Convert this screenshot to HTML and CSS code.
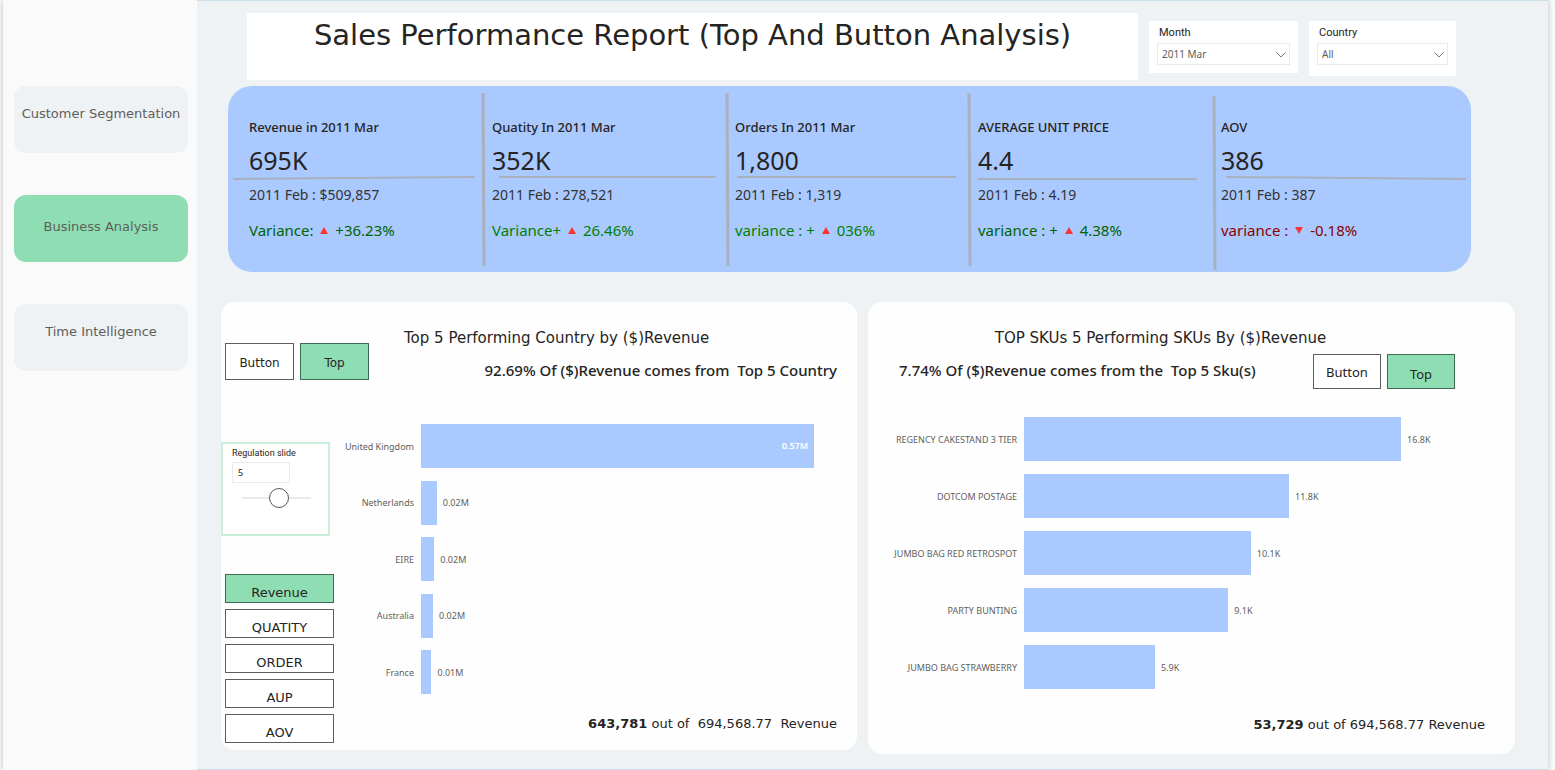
FILE: index.html
```html
<!DOCTYPE html>
<html lang="en">
<head>
<meta charset="utf-8">
<meta name="viewport" content="width=device-width, initial-scale=1">
<title>Sales Performance Report</title>
<link rel="stylesheet" href="styles.css">
</head>
<body>
<div class="report">
  <nav class="sidebar">
    <a class="nav-link" href="#customers">Customer Segmentation</a>
    <a class="nav-link active" href="#business">Business Analysis</a>
    <a class="nav-link" href="#time">Time Intelligence</a>
  </nav>
  <main class="main">
    <header class="header">
      <h1 class="title">Sales Performance Report (Top And Button Analysis)</h1>
      <div class="filter">
        <label for="month">Month</label>
        <div class="select-wrap">
          <select id="month"><option>2011 Mar</option></select>
          <svg class="chevron" viewBox="0 0 10 6"><path d="M0.5 0.5L5 5L9.500 0.500"/></svg>
        </div>
      </div>
      <div class="filter filter-tall">
        <label for="country">Country</label>
        <div class="select-wrap">
          <select id="country"><option>All</option></select>
          <svg class="chevron" viewBox="0 0 10 6"><path d="M0.5 0.5L5 5L9.500 0.500"/></svg>
        </div>
      </div>
    </header>

    <section class="kpis">
      <article class="kpi first">
        <div class="kpi-body">
          <h2 class="kpi-label">Revenue in 2011 Mar</h2>
          <p class="kpi-value">695K</p>
          <svg class="rule"><line x1="2%" y1="4" x2="97%" y2="2"/></svg>
          <p class="kpi-prev">2011 Feb : $509,857</p>
          <p class="kpi-var dark">Variance: <svg class="tri" viewBox="0 0 8 7"><path d="M4 0L8 7H0Z"/></svg> +36.23%</p>
        </div>
      </article>
      <article class="kpi">
        <svg class="sep"><line x1="1" y1="7" x2="2" y2="180"/></svg>
        <div class="kpi-body">
          <h2 class="kpi-label">Quatity In 2011 Mar</h2>
          <p class="kpi-value">352K</p>
          <svg class="rule"><line x1="5%" y1="2" x2="96%" y2="2"/></svg>
          <p class="kpi-prev">2011 Feb : 278,521</p>
          <p class="kpi-var">Variance+ <svg class="tri" viewBox="0 0 8 7"><path d="M4 0L8 7H0Z"/></svg> 26.46%</p>
        </div>
      </article>
      <article class="kpi">
        <svg class="sep"><line x1="2" y1="7" x2="3" y2="180"/></svg>
        <div class="kpi-body">
          <h2 class="kpi-label">Orders In 2011 Mar</h2>
          <p class="kpi-value">1,800</p>
          <svg class="rule"><line x1="3%" y1="2" x2="95%" y2="2"/></svg>
          <p class="kpi-prev">2011 Feb : 1,319</p>
          <p class="kpi-var">variance : + <svg class="tri" viewBox="0 0 8 7"><path d="M4 0L8 7H0Z"/></svg> 036%</p>
        </div>
      </article>
      <article class="kpi">
        <svg class="sep"><line x1="1" y1="7" x2="2" y2="180"/></svg>
        <div class="kpi-body">
          <h2 class="kpi-label">AVERAGE UNIT PRICE</h2>
          <p class="kpi-value">4.4</p>
          <svg class="rule"><line x1="2%" y1="4" x2="94%" y2="4"/></svg>
          <p class="kpi-prev">2011 Feb : 4.19</p>
          <p class="kpi-var dark">variance : + <svg class="tri" viewBox="0 0 8 7"><path d="M4 0L8 7H0Z"/></svg> 4.38%</p>
        </div>
      </article>
      <article class="kpi">
        <svg class="sep"><line x1="3" y1="10" x2="4" y2="184"/></svg>
        <div class="kpi-body">
          <h2 class="kpi-label">AOV</h2>
          <p class="kpi-value">386</p>
          <svg class="rule"><line x1="4%" y1="2" x2="98%" y2="4"/></svg>
          <p class="kpi-prev">2011 Feb : 387</p>
          <p class="kpi-var down">variance : <svg class="tri" viewBox="0 0 8 7"><path d="M0 0H8L4 7Z"/></svg> -0.18%</p>
        </div>
      </article>
    </section>

    <section class="panels">
      <article class="panel panel-country">
        <div class="country-head">
          <div class="toggle">
            <button type="button">Button</button>
            <button type="button" class="on">Top</button>
          </div>
          <div class="country-titles">
            <h2 class="panel-title">Top 5 Performing Country by ($)Revenue</h2>
            <p class="panel-sub">92.69% Of ($)Revenue comes from&nbsp; Top 5 Country</p>
          </div>
        </div>
        <div class="country-body">
          <div class="controls">
            <div class="slicer">
              <label for="topn">Regulation slide</label>
              <input id="topn" class="topn" type="text" value="5">
              <input class="slide" type="range" min="0" max="9" value="5" aria-label="Regulation slide">
            </div>
            <div class="metrics">
              <button type="button" class="on">Revenue</button>
              <button type="button">QUATITY</button>
              <button type="button">ORDER</button>
              <button type="button">AUP</button>
              <button type="button">AOV</button>
            </div>
          </div>
          <div class="country-chart">
            <ul class="chart">
              <li><span class="name">United Kingdom</span><span class="track"><span class="bar" style="width:94.5%"><b>0.57M</b></span></span></li>
              <li><span class="name">Netherlands</span><span class="track"><span class="bar" style="width:3.8%"></span><span class="val">0.02M</span></span></li>
              <li><span class="name">EIRE</span><span class="track"><span class="bar" style="width:3.2%"></span><span class="val">0.02M</span></span></li>
              <li><span class="name">Australia</span><span class="track"><span class="bar" style="width:2.9%"></span><span class="val">0.02M</span></span></li>
              <li><span class="name">France</span><span class="track"><span class="bar" style="width:2.5%"></span><span class="val">0.01M</span></span></li>
            </ul>
            <p class="total"><strong>643,781</strong> out of&nbsp; 694,568.77&nbsp; Revenue</p>
          </div>
        </div>
      </article>

      <article class="panel panel-sku">
        <h2 class="panel-title">TOP SKUs 5 Performing SKUs By ($)Revenue</h2>
        <div class="sku-head">
          <p class="panel-sub">7.74% Of ($)Revenue comes from the&nbsp; Top 5 Sku(s)</p>
          <div class="toggle">
            <button type="button">Button</button>
            <button type="button" class="on">Top</button>
          </div>
        </div>
        <ul class="chart">
          <li><span class="name">REGENCY CAKESTAND 3 TIER</span><span class="track"><span class="bar" style="width:81.8%"></span><span class="val">16.8K</span></span></li>
          <li><span class="name">DOTCOM POSTAGE</span><span class="track"><span class="bar" style="width:57.5%"></span><span class="val">11.8K</span></span></li>
          <li><span class="name">JUMBO BAG RED RETROSPOT</span><span class="track"><span class="bar" style="width:49.2%"></span><span class="val">10.1K</span></span></li>
          <li><span class="name">PARTY BUNTING</span><span class="track"><span class="bar" style="width:44.3%"></span><span class="val">9.1K</span></span></li>
          <li><span class="name">JUMBO BAG STRAWBERRY</span><span class="track"><span class="bar" style="width:28.4%"></span><span class="val">5.9K</span></span></li>
        </ul>
        <p class="total"><strong>53,729</strong> out of 694,568.77 Revenue</p>
      </article>
    </section>
  </main>
</div>
</body>
</html>
```
FILE: styles.css
```css
:root {
  --blue: #aac9ff;
  --green: #8fdeb3;
  --ink: #252423;
  --canvas: #eef2f4;
  --verdana: Verdana, "DejaVu Sans", sans-serif;
  --segoe: "Segoe UI", "Noto Sans", sans-serif;
}

* { box-sizing: border-box; }

body {
  margin: 0;
  padding: 0 7px 0 3px;
  background: #fafafa;
  color: var(--ink);
  font-family: var(--segoe);
}

h1, h2, p, ul { margin: 0; padding: 0; font-weight: 400; }
button, input, select { margin: 0; font: inherit; color: inherit; }

.report {
  display: flex;
  min-height: 100vh;
  box-shadow: 0 0 6px rgba(0, 0, 0, 0.25);
}

/* Sidebar */
.sidebar {
  display: flex;
  flex: 0 0 194px;
  flex-direction: column;
  gap: 42px;
  padding: 86px 9px 0 11px;
  background: #fafafa;
}

.nav-link {
  min-height: 67px;
  padding-top: 18px;
  border-radius: 12px;
  background: var(--canvas);
  color: #605e5c;
  font: 13px/20px var(--verdana);
  text-align: center;
  text-decoration: none;
  white-space: nowrap;
}

.nav-link.active { padding-top: 22px; background: var(--green); }

.main {
  flex: 1;
  min-width: 0;
  border-top: 1px solid #cddfe9;
  border-bottom: 1px solid #cddfe9;
  background: var(--canvas);
}

/* Header */
.header {
  display: flex;
  align-items: flex-start;
  gap: 11px;
  padding: 12px 92px 0 50px;
}

.title {
  flex: 1;
  height: 67px;
  background: #fff;
  font: 29px/44px var(--verdana);
  text-align: center;
  white-space: nowrap;
}

.filter {
  width: 149px;
  margin-top: 8px;
  padding: 4px 8px 8px;
  background: #fff;
}

.filter-tall { width: 147px; padding-bottom: 11px; }

.filter label {
  display: block;
  padding-left: 2px;
  font: 11px/16px Roboto, sans-serif;
}

.select-wrap { position: relative; margin-top: 2px; }

.select-wrap select {
  display: block;
  width: 100%;
  height: 22px;
  padding: 0 4px;
  appearance: none;
  border: 1px solid #eaeaea;
  border-radius: 0;
  background: #fff;
  color: #605e5c;
  font-size: 10px;
}

.chevron {
  position: absolute;
  top: 9px;
  right: 4px;
  width: 10px;
  height: 6px;
  fill: none;
  stroke: #777;
  pointer-events: none;
}

/* KPI band */
.kpis {
  display: grid;
  grid-template-columns: 254fr 243fr 243fr 243fr 260fr;
  margin: 6px 77px 0 31px;
  border-radius: 24px;
  background: var(--blue);
}

.kpi { display: flex; min-width: 0; }
.kpi-body { flex: 1; min-width: 0; padding: 31px 0 32px; }
.kpi-body > h2, .kpi-body > p { padding-left: 5px; white-space: nowrap; }
.kpi.first .kpi-body > h2, .kpi.first .kpi-body > p { padding-left: 21px; }

.sep { flex: 0 0 5px; width: 5px; height: auto; overflow: visible; }
.sep line { stroke: #a9b0be; stroke-width: 3; }
.rule line { stroke: #a9afbb; stroke-width: 2; }

.rule { display: block; width: 100%; height: 6px; }

.kpi-label { font: 500 13px/20px var(--segoe); }
.kpi-value { margin-top: 8px; font: 25px/30px var(--segoe); }
.kpi-prev { margin-top: 4px; color: #333; font-size: 14px; line-height: 20px; }
.kpi-var { margin-top: 15px; color: #008000; font-size: 15px; line-height: 20px; }
.kpi-var.dark { color: #006400; }
.kpi-var.down { color: #8b0000; }
.tri { width: 8px; height: 7px; margin: 0 3px 2px; fill: #fd3232; }

/* Chart panels */
.panels {
  display: grid;
  grid-template-columns: 636fr 647fr;
  gap: 11px;
  margin: 30px 33px 14px 24px;
}

.panel { min-width: 0; border-radius: 14px; background: #fefefe; }
.panel-title { font: 15px/20px var(--verdana); white-space: nowrap; }
.panel-sub { font: 500 15px/20px var(--segoe); white-space: nowrap; }

.toggle { display: flex; gap: 6px; }

.toggle button, .metrics button {
  padding: 0;
  border: 1px solid #605e5c;
  border-radius: 0;
  background: #fff;
  font: 13px/18px var(--segoe);
}

.toggle button { width: 69px; height: 37px; }
.toggle .on, .metrics .on { border-color: #3f6b54; background: var(--green); }
.panel-country .toggle button { padding-top: 2px; font-family: var(--verdana); font-size: 12px; }

.panel-country { margin-bottom: 4px; }

.country-head { display: flex; gap: 35px; padding: 26px 20px 0 4px; }
.country-head .toggle { padding-top: 15px; }
.country-titles { flex: 1; }
.country-titles .panel-sub { margin-top: 12px; text-align: right; }

.country-body { display: flex; }
.controls { flex: 0 0 113px; padding-top: 62px; }

.slicer {
  width: 109px;
  height: 94px;
  padding: 1px 9px;
  border: 2px solid #c7efd9;
  background: #fff;
}

.slicer label { display: block; font: 9px/16px Roboto, sans-serif; }

.topn {
  display: block;
  width: 58px;
  height: 21px;
  margin-top: 1px;
  padding: 0 5px;
  border: 1px solid #eaeaea;
  font-size: 9px;
}

.slide {
  display: block;
  width: 69px;
  height: 20px;
  margin: 5px 0 0 10px;
  appearance: none;
  background: linear-gradient(#eaeaea, #eaeaea) center / 100% 2px no-repeat;
}

.slide::-webkit-slider-thumb {
  width: 20px;
  height: 20px;
  appearance: none;
  border: 1px solid #555;
  border-radius: 50%;
  background: #fff;
}

.metrics { display: flex; flex-direction: column; gap: 6px; margin: 38px 0 0 4px; }
.metrics button { height: 29px; padding-top: 9px; font: 13px/16px var(--verdana); }

.chart { list-style: none; }
.chart li { display: flex; height: 44px; align-items: center; }
.name { padding-right: 7px; color: #605e5c; font-size: 9px; text-align: right; white-space: nowrap; }
.track { display: flex; flex: 1; align-items: center; height: 100%; }
.bar { height: 100%; background: var(--blue); }
.val { padding-left: 6px; color: #605e5c; font-size: 9px; }

.bar b {
  display: block;
  padding-right: 6px;
  color: #fff;
  font-size: 9px;
  font-weight: 600;
  line-height: 44px;
  text-align: right;
}

.country-chart { display: flex; flex: 1; flex-direction: column; padding: 44px 20px 15px 0; }
.country-chart .chart { display: flex; height: 270px; flex-direction: column; justify-content: space-between; }
.country-chart .name { width: 87px; }

.total { font: 13px/20px var(--verdana); text-align: right; white-space: pre; }
.country-chart .total { margin-top: 20px; }

.panel-sku { padding: 26px 30px 19px 24px; }
.panel-sku .panel-title { padding-right: 56px; text-align: center; }
.sku-head { display: flex; justify-content: space-between; padding: 6px 30px 0 7px; }
.sku-head .panel-sub { padding-top: 6px; }
.sku-head .toggle button { width: 68px; height: 35px; }
.sku-head .toggle .on { padding-top: 4px; }
.panel-sku .chart { display: grid; gap: 13px; margin-top: 28px; }
.panel-sku .name { width: 132px; flex: none; }
.panel-sku .total { margin-top: 26px; }
```
